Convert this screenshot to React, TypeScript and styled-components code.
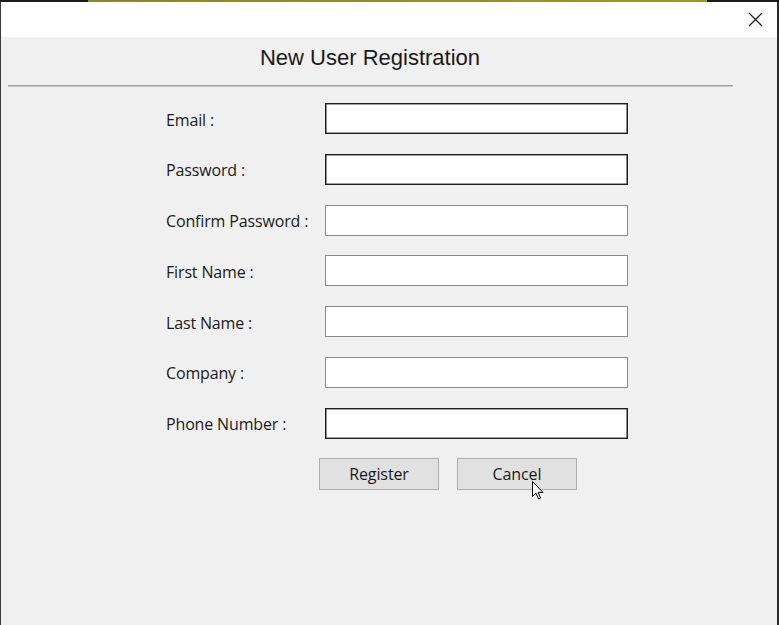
import React from 'react'
import styled, { createGlobalStyle } from 'styled-components'

const GlobalStyle = createGlobalStyle`
  html, body {
    margin: 0;
    padding: 0;
    background: #f0f0f0;
  }
  * {
    box-sizing: border-box;
  }
`

const Screen = styled.div`
  width: 779px;
  height: 625px;
  display: flex;
  flex-direction: column;
  overflow: hidden;
  position: relative;
`

// the strip of the window behind, peeking above ours
const BackStrip = styled.div`
  height: 2px;
  background: linear-gradient(
    to right,
    #1b1b1b 0px,
    #1b1b1b 88px,
    #8f8420 88px,
    #a39626 707px,
    #1b1b1b 707px
  );
`

const Window = styled.div`
  flex: 1;
  display: flex;
  flex-direction: column;
  border-left: 1px solid #3a3a3a;
  border-right: 2px solid #2a2a2a;
  background: #f0f0f0;
`

const TitleBar = styled.div`
  height: 35px;
  background: #ffffff;
  display: flex;
  justify-content: flex-end;
  align-items: center;
`

const CloseButton = styled.button`
  width: 46px;
  height: 35px;
  border: none;
  background: transparent;
  display: flex;
  align-items: center;
  justify-content: center;
  padding: 0 0 0 3px;
`

const Heading = styled.h1`
  margin: 0 38px 0 0;
  padding: 7px 0 0 0;
  text-align: center;
  font-family: "Liberation Sans", Arial, sans-serif;
  font-weight: normal;
  font-size: 22px;
  color: #1a1a1a;
  height: 40px;
  line-height: 28px;
`

const Divider = styled.hr`
  margin: 8px 0 0 7px;
  width: 725px;
  height: 2px;
  border: none;
  border-top: 1px solid #a0a0a0;
  border-bottom: 1px solid #c8c8c8;
`

const Form = styled.div`
  margin: 16px 0 0 165px;
  display: grid;
  grid-template-columns: 159px 303px;
  row-gap: 19.8px;
  align-items: center;
`

const Label = styled.label`
  font-family: "Open Sans", "Noto Sans", sans-serif;
  font-size: 16px;
  color: #1a1a1a;
  letter-spacing: -0.15px;
  padding-top: 2px;
`

const Field = styled.input<{ $dark?: boolean }>`
  height: 31px;
  width: 303px;
  border: 1px solid ${(p) => (p.$dark ? '#202020' : '#8a8a8a')};
  box-shadow: ${(p) => (p.$dark ? 'inset 0 0 0 0.6px #404040' : 'none')};
  background: #ffffff;
  outline: none;
  padding: 0 4px;
  font-family: "Open Sans", sans-serif;
  font-size: 14px;
`

const Buttons = styled.div`
  margin: 19px 0 0 318px;
  display: flex;
  gap: 18px;
`

const Button = styled.button`
  width: 120px;
  height: 32px;
  background: #e1e1e1;
  border: 1px solid #adadad;
  font-family: "Open Sans", "Noto Sans", sans-serif;
  font-size: 16px;
  color: #1a1a1a;
  padding: 0;
  letter-spacing: -0.1px;
`

const Pointer = styled.svg`
  position: absolute;
  left: 532px;
  top: 481px;
`

const fields = [
  { label: 'Email :', dark: true },
  { label: 'Password :', dark: true },
  { label: 'Confirm Password :', dark: false },
  { label: 'First Name :', dark: false },
  { label: 'Last Name :', dark: false },
  { label: 'Company :', dark: false },
  { label: 'Phone Number :', dark: true },
]

const App: React.FunctionComponent = () => {
  return (
    <Screen>
      <GlobalStyle />
      <BackStrip />
      <Window>
        <TitleBar>
          <CloseButton aria-label="Close">
            <svg width="15" height="15" viewBox="0 0 15 15">
              <path d="M1 1 L14 14 M14 1 L1 14" stroke="#1a1a1a" strokeWidth="1.2" />
            </svg>
          </CloseButton>
        </TitleBar>
        <Heading>New User Registration</Heading>
        <Divider />
        <Form>
          {fields.map((f) => (
            <React.Fragment key={f.label}>
              <Label>{f.label}</Label>
              <Field $dark={f.dark} />
            </React.Fragment>
          ))}
        </Form>
        <Buttons>
          <Button>Register</Button>
          <Button>Cancel</Button>
        </Buttons>
      </Window>
      {/* mouse pointer over the Cancel button */}
      <Pointer width="12" height="19" viewBox="0 0 12 19">
        <path
          d="M0.5 0.5 L0.5 15.5 L4 12.2 L6.6 18 L8.6 17.1 L6.1 11.4 L11 11.4 Z"
          fill="#ffffff"
          stroke="#000000"
          strokeWidth="1"
          strokeLinejoin="round"
        />
      </Pointer>
    </Screen>
  )
}

export default App
